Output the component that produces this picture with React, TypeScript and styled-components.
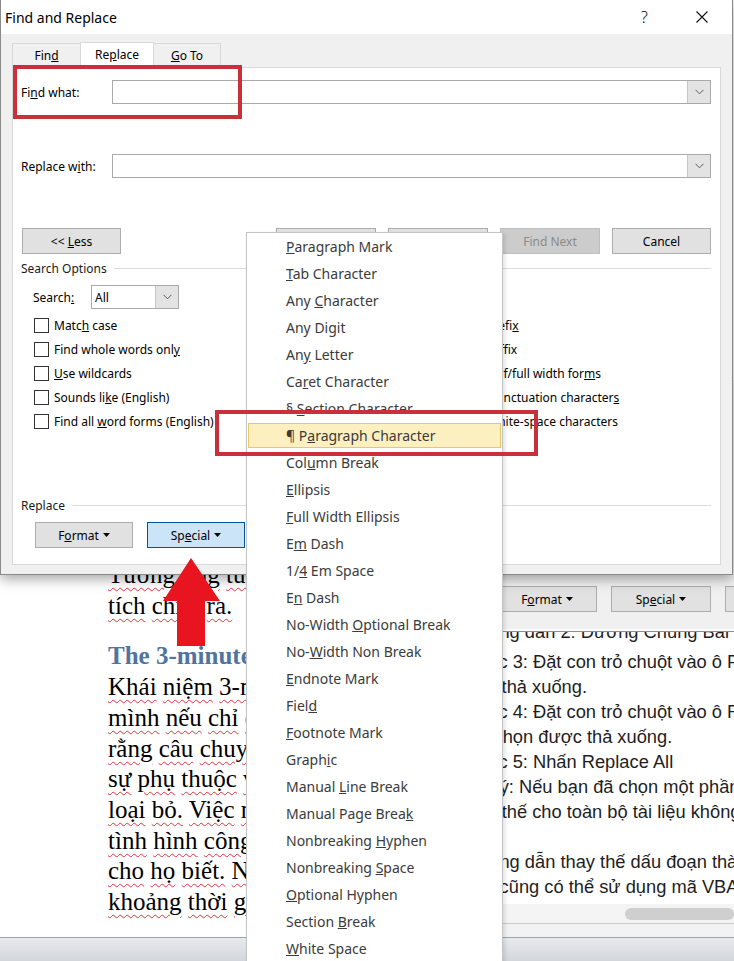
import React from 'react';
import styled, { createGlobalStyle, css } from 'styled-components';

const GlobalStyle = createGlobalStyle`
  html, body { margin: 0; padding: 0; background: #fff; }
  body { font-family: 'Noto Sans', 'DejaVu Sans', sans-serif; }
  * { box-sizing: border-box; }
`;

const leftDocLines = [
  'Khái niệm 3-minute rule được',
  'mình nếu chỉ có ba phút để',
  'rằng câu chuyện của mình',
  'sự phụ thuộc vào người khác',
  'loại bỏ. Việc này giúp',
  'tình hình công việc một cách',
  'cho họ biết. Nếu không có',
  'khoảng thời gian ngắn',
];

const rightDocLines = [
  'Bước 3: Đặt con trỏ chuột vào ô Find what',
  'mục thả xuống.',
  'Bước 4: Đặt con trỏ chuột vào ô Replace with',
  'lựa chọn được thả xuống.',
  'Bước 5: Nhấn Replace All',
  'Lưu ý: Nếu bạn đã chọn một phần văn bản',
  'thay thế cho toàn bộ tài liệu không',
  '\u00a0',
  'Hướng dẫn thay thế dấu đoạn thành',
  'Bạn cũng có thể sử dụng mã VBA',
];

// [before, underlined, after]
const specialItems: [string, string, string][] = [
  ['', 'P', 'aragraph Mark'],
  ['', 'T', 'ab Character'],
  ['Any ', 'C', 'haracter'],
  ['Any Di', 'g', 'it'],
  ['An', 'y', ' Letter'],
  ['Ca', 'r', 'et Character'],
  ['§ ', 'S', 'ection Character'],
  ['¶ P', 'a', 'ragraph Character'],
  ['Col', 'u', 'mn Break'],
  ['', 'E', 'llipsis'],
  ['', 'F', 'ull Width Ellipsis'],
  ['E', 'm', ' Dash'],
  ['1/', '4', ' Em Space'],
  ['E', 'n', ' Dash'],
  ['No-Width ', 'O', 'ptional Break'],
  ['No-', 'W', 'idth Non Break'],
  ['', 'E', 'ndnote Mark'],
  ['Fiel', 'd', ''],
  ['', 'F', 'ootnote Mark'],
  ['Graph', 'i', 'c'],
  ['Manual ', 'L', 'ine Break'],
  ['Manual Page Brea', 'k', ''],
  ['Nonbreaking ', 'H', 'yphen'],
  ['Nonbreaking ', 'S', 'pace'],
  ['', 'O', 'ptional Hyphen'],
  ['Section ', 'B', 'reak'],
  ['', 'W', 'hite Space'],
];

const leftOptions: [string, string, string][] = [
  ['Matc', 'h', ' case'],
  ['Find whole words onl', 'y', ''],
  ['', 'U', 'se wildcards'],
  ['Sounds li', 'k', 'e (English)'],
  ['Find all ', 'w', 'ord forms (English)'],
];

const rightOptions: [string, string, string][] = [
  ['Match prefi', 'x', ''],
  ['Ma', 't', 'ch suffix'],
  ['Match half/full width for', 'm', 's'],
  ['Ignore punctuation character', 's', ''],
  ['Ignore white-space characters', '', ''],
];

const Mnemonic: React.FC<{ parts: [string, string, string] }> = ({ parts }) => (
  <span>
    {parts[0]}
    {parts[1] && <u>{parts[1]}</u>}
    {parts[2]}
  </span>
);

const Chevron = () => (
  <svg width="9" height="6" viewBox="0 0 9 6">
    <polyline points="0.5,0.8 4.5,4.8 8.5,0.8" fill="none" stroke="#5a5a5a" strokeWidth="1" />
  </svg>
);

const Caret = () => (
  <svg width="7" height="4" viewBox="0 0 7 4">
    <polygon points="0,0 7,0 3.5,4" fill="#000" />
  </svg>
);

const SquiggleLine: React.FC<{ text: string }> = ({ text }) => (
  <div>
    {text.split(' ').map((w, i) => (
      <React.Fragment key={i}>
        {i > 0 && ' '}
        <Squiggle>{w}</Squiggle>
      </React.Fragment>
    ))}
  </div>
);

export default function App() {
  return (
    <>
      <GlobalStyle />
      <Stage>
        <LeftDoc>
          <DocBody>
            <SquiggleLine text="Tương ứng từng loại" />
            <SquiggleLine text="tích chiết ra." />
            <DocHeading>The 3-minute Drill</DocHeading>
            {leftDocLines.map((l, i) => (
              <SquiggleLine key={i} text={l} />
            ))}
          </DocBody>
          <StatusBar />
        </LeftDoc>

        <RightDoc>
          <BackDialog>
            <BackButtons>
              <Button>
                <Mnemonic parts={['F', 'o', 'rmat']} /> <Caret />
              </Button>
              <Button>
                <Mnemonic parts={['Sp', 'e', 'cial']} /> <Caret />
              </Button>
              <Button>No Formatting</Button>
            </BackButtons>
          </BackDialog>
          <SansText>
            <CutLine>Hướng dẫn 2: Dương Chung Bài</CutLine>
            {rightDocLines.map((l, i) => (
              <div key={i}>{l}</div>
            ))}
          </SansText>
          <ScrollTrack>
            <ScrollThumb />
          </ScrollTrack>
          <GrayBand />
          <StatusBar />
        </RightDoc>

        <Dialog>
          <TitleBar>
            <Title>Find and Replace</Title>
            <TitleButton>?</TitleButton>
            <TitleButton>
              <svg width="12" height="12" viewBox="0 0 12 12">
                <path d="M0.5 0.5 L11.5 11.5 M11.5 0.5 L0.5 11.5" stroke="#111" strokeWidth="1.1" />
              </svg>
            </TitleButton>
          </TitleBar>

          <TabRow>
            <Tab $w={69}>
              <Mnemonic parts={['Fin', 'd', '']} />
            </Tab>
            <Tab $w={74} $active>
              <Mnemonic parts={['Re', 'p', 'lace']} />
            </Tab>
            <Tab $w={68}>
              <Mnemonic parts={['', 'G', 'o To']} />
            </Tab>
          </TabRow>

          <Panel>
            <FieldRow>
              <FieldLabel>
                <Mnemonic parts={['Fi', 'n', 'd what:']} />
              </FieldLabel>
              <Combo>
                <ComboArrow>
                  <Chevron />
                </ComboArrow>
              </Combo>
            </FieldRow>

            <FieldRow $gap={50}>
              <FieldLabel>
                <Mnemonic parts={['Replace w', 'i', 'th:']} />
              </FieldLabel>
              <Combo>
                <ComboArrow>
                  <Chevron />
                </ComboArrow>
              </Combo>
            </FieldRow>

            <ActionRow>
              <Button $w={99}>
                <Mnemonic parts={['<< ', 'L', 'ess']} />
              </Button>
              <ButtonGroup>
                <Button>Replace</Button>
                <Button>Replace All</Button>
                <Button $disabled>Find Next</Button>
                <Button $w={99}>Cancel</Button>
              </ButtonGroup>
            </ActionRow>

            <GroupHeader $gap={7}>
              <span>Search Options</span>
              <Rule />
            </GroupHeader>

            <SearchRow>
              <SearchLabel>
                <Mnemonic parts={['Search', ':', '']} />
              </SearchLabel>
              <Select>
                <SelectValue>All</SelectValue>
                <ComboArrow>
                  <Chevron />
                </ComboArrow>
              </Select>
            </SearchRow>

            <OptionsGrid>
              {[...leftOptions, ...rightOptions].map((o, i) => (
                <CheckRow key={i}>
                  <CheckBox />
                  <Mnemonic parts={o} />
                </CheckRow>
              ))}
            </OptionsGrid>

            <GroupHeader $gap={65}>
              <span>Replace</span>
              <Rule />
            </GroupHeader>

            <FormatRow>
              <Button $w={98}>
                <Mnemonic parts={['F', 'o', 'rmat']} /> <Caret />
              </Button>
              <Button $w={98} $pressed>
                <Mnemonic parts={['Sp', 'e', 'cial']} /> <Caret />
              </Button>
            </FormatRow>
          </Panel>
        </Dialog>

        <Menu>
          {specialItems.map((p, i) => (
            <MenuItem key={i} $active={i === 7}>
              <Mnemonic parts={p} />
            </MenuItem>
          ))}
        </Menu>

        <Annotation $x={13} $y={65} $w={229} $h={54} />
        <Annotation $x={215} $y={410} $w={323} $h={46} />

        <Arrow width="64" height="92" viewBox="0 0 64 92">
          <polygon points="31,3 60,46 45,46 45,91 17,91 17,46 3,46" fill="#e8141f" />
        </Arrow>
      </Stage>
    </>
  );
}

// --- canvas & background windows ---

const Stage = styled.div`
  position: relative;
  width: 734px;
  height: 961px;
  overflow: hidden;
  background: #fff;
`;

const LeftDoc = styled.div`
  position: absolute;
  left: 0;
  top: 560px;
  width: 320px;
  height: 401px;
  display: flex;
  flex-direction: column;
  background: #fff;
`;

const DocBody = styled.div`
  flex: 1;
  padding-left: 108px;
  font-family: 'Liberation Serif', 'DejaVu Serif', serif;
  font-size: 25px;
  line-height: 30.7px;
  color: #000;
  white-space: nowrap;
  overflow: hidden;
`;

const Squiggle = styled.span`
  text-decoration: underline wavy #e0343c;
  text-decoration-thickness: 1px;
  text-underline-offset: 4px;
`;

const DocHeading = styled.div`
  margin-top: 20px;
  font-weight: 700;
  color: #4f74a0;
`;

const StatusBar = styled.div`
  height: 24px;
  border-top: 1px solid #9ea3a8;
  background: linear-gradient(#e8eaed, #d3d7dc);
`;

const RightDoc = styled.div`
  position: absolute;
  left: 440px;
  top: 380px;
  width: 294px;
  height: 581px;
  display: flex;
  flex-direction: column;
  background: #fff;
`;

const BackDialog = styled.div`
  position: relative;
  z-index: 1;
  height: 252px;
  width: 420px;
  display: flex;
  flex-direction: column;
  justify-content: flex-end;
  padding: 0 0 19px 57px;
  background: #f0f0f0;
  border-bottom: 1px solid #8e8e8e;
  box-shadow: inset 0 -2px 0 #fafafa;
  font-size: 12px;
`;

const BackButtons = styled.div`
  display: flex;
  gap: 14px;
`;

const SansText = styled.div`
  flex: 1;
  margin-top: -18px;
  padding-left: 22px;
  font-family: 'Liberation Sans', Arial, sans-serif;
  font-size: 18.3px;
  line-height: 25px;
  color: #1e1e1e;
  white-space: nowrap;
  overflow: hidden;
`;

const CutLine = styled.div`
  line-height: 35px;
`;

const ScrollTrack = styled.div`
  height: 20px;
  display: flex;
  align-items: center;
  padding-left: 185px;
  background: #f4f4f4;
  border-bottom: 1px solid #c9c9c9;
`;

const ScrollThumb = styled.div`
  width: 140px;
  height: 12px;
  border-radius: 6px;
  background: #cfcfcf;
`;

const GrayBand = styled.div`
  height: 13px;
  background: #f2f2f2;
`;

// --- main dialog ---

const Dialog = styled.div`
  position: absolute;
  left: 0;
  top: 0;
  z-index: 3;
  width: 733px;
  height: 575px;
  display: flex;
  flex-direction: column;
  background: #f0f0f0;
  border: 1px solid #8a8a8a;
  border-top: none;
  box-shadow: 0 4px 12px rgba(0, 0, 0, 0.35);
  font-size: 12px;
  color: #000;
`;

const TitleBar = styled.div`
  height: 34px;
  display: flex;
  align-items: center;
  padding: 0 2px 0 4px;
  background: #fff;
`;

const Title = styled.div`
  flex: 1;
  font-size: 14px;
  color: #000;
`;

const TitleButton = styled.div`
  width: 57px;
  height: 34px;
  display: flex;
  align-items: center;
  justify-content: center;
  font-size: 16px;
  font-weight: 300;
`;

const TabRow = styled.div`
  position: relative;
  z-index: 1;
  height: 34px;
  margin-bottom: -1px;
  display: flex;
  padding-left: 11px;
`;

const Tab = styled.div<{ $w: number; $active?: boolean }>`
  width: ${(p) => p.$w}px;
  height: 24px;
  margin-top: 9px;
  display: flex;
  align-items: center;
  justify-content: center;
  border: 1px solid #d9d9d9;
  border-bottom: none;
  background: #f0f0f0;
  & + & {
    margin-left: -1px;
  }
  ${(p) =>
    p.$active &&
    css`
      position: relative;
      height: 26px;
      margin-top: 8px;
      background: #fff;
      padding-bottom: 3px;
    `}
`;

const Panel = styled.div`
  margin: 0 11px;
  height: 498px;
  display: flex;
  flex-direction: column;
  padding: 12px 9px 0 8px;
  background: #fff;
  border: 1px solid #d9d9d9;
`;

const FieldRow = styled.div<{ $gap?: number }>`
  height: 24px;
  margin-top: ${(p) => p.$gap || 0}px;
  display: flex;
  align-items: center;
`;

const FieldLabel = styled.div`
  width: 91px;
`;

const Combo = styled.div`
  flex: 1;
  height: 24px;
  display: flex;
  justify-content: flex-end;
  background: #fff;
  border: 1px solid #a9a9a9;
`;

const ComboArrow = styled.div`
  width: 23px;
  display: flex;
  align-items: center;
  justify-content: center;
  background: #e3e3e3;
  border-left: 1px solid #c6c6c6;
`;

const ActionRow = styled.div`
  margin-top: 50px;
  padding-left: 1px;
  display: flex;
  justify-content: space-between;
`;

const ButtonGroup = styled.div`
  display: flex;
  gap: 12px;
`;

const Button = styled.div<{ $w?: number; $disabled?: boolean; $pressed?: boolean }>`
  width: ${(p) => p.$w || 100}px;
  height: 26px;
  flex-shrink: 0;
  display: flex;
  align-items: center;
  justify-content: center;
  gap: 4px;
  white-space: pre;
  background: #e1e1e1;
  border: 1px solid #adadad;
  color: #000;
  ${(p) =>
    p.$disabled &&
    css`
      background: #cccccc;
      border-color: #bfbfbf;
      color: #8a8a8a;
    `}
  ${(p) =>
    p.$pressed &&
    css`
      background: #cce4f7;
      border-color: #005499;
    `}
`;

const GroupHeader = styled.div<{ $gap: number }>`
  margin-top: ${(p) => p.$gap}px;
  height: 14px;
  display: flex;
  align-items: center;
  gap: 7px;
  color: #1a1a1a;
`;

const Rule = styled.div`
  flex: 1;
  height: 1px;
  background: #dcdcdc;
`;

const SearchRow = styled.div`
  margin-top: 10px;
  padding-left: 12px;
  height: 24px;
  display: flex;
  align-items: center;
`;

const SearchLabel = styled.div`
  width: 58px;
`;

const Select = styled.div`
  width: 88px;
  height: 24px;
  display: flex;
  background: #fff;
  border: 1px solid #a9a9a9;
`;

const SelectValue = styled.div`
  flex: 1;
  display: flex;
  align-items: center;
  padding-left: 3px;
`;

const OptionsGrid = styled.div`
  margin-top: 4px;
  padding-left: 13px;
  display: grid;
  grid-template-columns: 394px 1fr;
  grid-template-rows: repeat(5, 24px);
  grid-auto-flow: column;
`;

const CheckRow = styled.div`
  display: flex;
  align-items: center;
  gap: 5px;
  white-space: nowrap;
`;

const CheckBox = styled.div`
  width: 15px;
  height: 15px;
  flex-shrink: 0;
  background: #fff;
  border: 1px solid #333;
`;

const FormatRow = styled.div`
  margin-top: 10px;
  padding-left: 14px;
  display: flex;
  gap: 14px;
`;

// --- overlays ---

const Menu = styled.div`
  position: absolute;
  left: 246px;
  top: 232px;
  z-index: 5;
  width: 257px;
  height: 760px;
  background: #fff;
  border: 1px solid #c4c4c4;
  box-shadow: 2px 2px 4px rgba(0, 0, 0, 0.12);
  font-size: 14px;
  color: #3b3b3b;
`;

const MenuItem = styled.div<{ $active?: boolean }>`
  height: 27px;
  display: flex;
  align-items: center;
  padding-left: 39px;
  white-space: pre;
  ${(p) =>
    p.$active &&
    css`
      height: 25px;
      margin: 1px 1px;
      padding-left: 38px;
      background: #fcefc0;
      box-shadow: inset 0 0 0 1px #e9c86c;
    `}
`;

const Annotation = styled.div<{ $x: number; $y: number; $w: number; $h: number }>`
  position: absolute;
  z-index: 6;
  left: ${(p) => p.$x}px;
  top: ${(p) => p.$y}px;
  width: ${(p) => p.$w}px;
  height: ${(p) => p.$h}px;
  border: 4px solid #c9303a;
`;

const Arrow = styled.svg`
  position: absolute;
  z-index: 6;
  left: 160px;
  top: 555px;
`;
